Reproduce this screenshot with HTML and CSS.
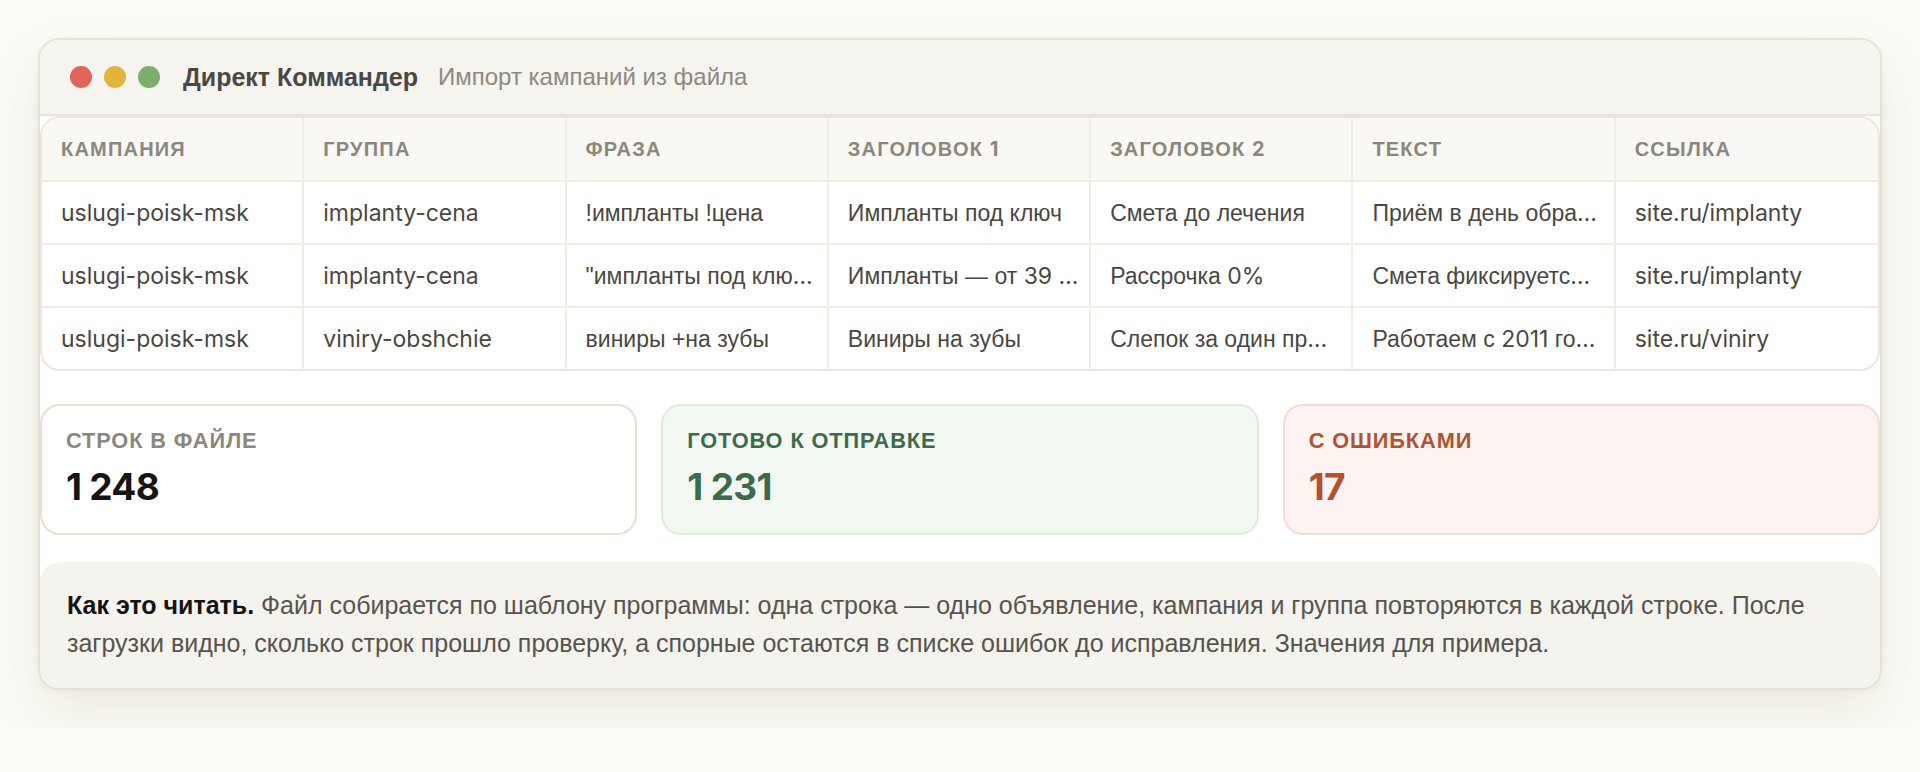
FILE: index.html
```html
<!DOCTYPE html>
<html lang="ru">
<head>
<meta charset="utf-8">
<title>Директ Коммандер — импорт кампаний</title>
<link rel="stylesheet" href="styles.css">
</head>
<body>
<div class="page">
  <div class="window">
    <div class="titlebar">
      <div class="dots">
        <span class="dot dot-red"></span>
        <span class="dot dot-yellow"></span>
        <span class="dot dot-green"></span>
      </div>
      <span class="app-name">Директ Коммандер</span>
      <span class="app-sub">Импорт кампаний из файла</span>
    </div>

    <div class="table-wrap">
      <table class="grid">
        <thead>
          <tr>
            <th>Кампания</th>
            <th>Группа</th>
            <th>Фраза</th>
            <th>Заголовок <span class="lat">1</span></th>
            <th>Заголовок <span class="lat">2</span></th>
            <th>Текст</th>
            <th>Ссылка</th>
          </tr>
        </thead>
        <tbody>
          <tr>
            <td><span class="lat">uslugi-poisk-msk</span></td>
            <td><span class="lat">implanty-cena</span></td>
            <td>!импланты !цена</td>
            <td>Импланты под ключ</td>
            <td>Смета до лечения</td>
            <td title="Приём в день обращения">Приём в день обра<span class="lat">…</span></td>
            <td><span class="lat">site.ru/implanty</span></td>
          </tr>
          <tr>
            <td><span class="lat">uslugi-poisk-msk</span></td>
            <td><span class="lat">implanty-cena</span></td>
            <td title="&quot;импланты под ключ&quot;">"импланты под клю<span class="lat">…</span></td>
            <td title="Импланты — от 39 000 ₽">Импланты — от <span class="lat">39 …</span></td>
            <td>Рассрочка <span class="lat">0%</span></td>
            <td title="Смета фиксируется в договоре">Смета фиксируетс<span class="lat">…</span></td>
            <td><span class="lat">site.ru/implanty</span></td>
          </tr>
          <tr>
            <td><span class="lat">uslugi-poisk-msk</span></td>
            <td><span class="lat">viniry-obshchie</span></td>
            <td>виниры +на зубы</td>
            <td>Виниры на зубы</td>
            <td title="Слепок за один приём">Слепок за один пр<span class="lat">…</span></td>
            <td title="Работаем с 2011 года">Работаем с <span class="lat">2011</span> го<span class="lat">…</span></td>
            <td><span class="lat">site.ru/viniry</span></td>
          </tr>
        </tbody>
      </table>
    </div>

    <div class="stats">
      <div class="stat stat-total">
        <div class="stat-label">Строк в файле</div>
        <div class="stat-value">1&nbsp;248</div>
      </div>
      <div class="stat stat-ok">
        <div class="stat-label">Готово к отправке</div>
        <div class="stat-value">1&nbsp;231</div>
      </div>
      <div class="stat stat-err">
        <div class="stat-label">С ошибками</div>
        <div class="stat-value">17</div>
      </div>
    </div>

    <p class="note"><strong>Как это читать.</strong> Файл собирается по шаблону программы: одна строка — одно объявление, кампания и группа повторяются в каждой строке. После загрузки видно, сколько строк прошло проверку, а спорные остаются в списке ошибок до исправления. Значения для примера.</p>
  </div>
</div>
</body>
</html>
```

FILE: styles.css
```css
* {
  box-sizing: border-box;
}

html,
body {
  margin: 0;
  padding: 0;
}

body {
  background: #fcfbf6;
  font-family: "Liberation Sans", Arial, sans-serif;
  color: #4a4741;
}

.page {
  padding: 38px;
}

.window {
  width: 100%;
  background: #ffffff;
  border: 2px solid #e6e2d5;
  border-radius: 21px;
  overflow: hidden;
  box-shadow: 0 24px 60px rgba(90, 80, 40, 0.1), 0 2px 8px rgba(90, 80, 40, 0.04);
}

/* title bar */
.titlebar {
  display: flex;
  align-items: center;
  height: 76px;
  padding: 0 30px;
  background: #f5f4ef;
  border-bottom: 2px solid #e8e4d8;
}

.dots {
  display: flex;
  gap: 12px;
}

.dot {
  width: 22px;
  height: 22px;
  border-radius: 50%;
}

.dot-red {
  background: #e0645b;
}

.dot-yellow {
  background: #e3b33e;
}

.dot-green {
  background: #7eae6b;
}

.app-name {
  margin-left: 23px;
  font-size: 25px;
  font-weight: 700;
  color: #4b4843;
}

.app-sub {
  margin-left: 20px;
  font-size: 24px;
  color: #8d897f;
}

.lat {
  font-family: Inter, "Liberation Sans", sans-serif;
}

/* table */
.table-wrap {
  border: 2px solid #ebe7dc;
  border-radius: 20px;
  overflow: hidden;
}

.grid {
  width: 100%;
  table-layout: fixed;
  border-collapse: separate;
  border-spacing: 0;
}

.grid th,
.grid td {
  padding: 18.5px 8px 18.5px 19px;
  line-height: 24px;
  text-align: left;
  white-space: nowrap;
  overflow: hidden;
  text-overflow: ellipsis;
  border-right: 2px solid #f0ede6;
  border-bottom: 2px solid #f0ede6;
}

.grid th:last-child,
.grid td:last-child {
  border-right: none;
}

.grid tbody tr:last-child td {
  border-bottom: none;
}

.grid th {
  padding-top: 19px;
  padding-bottom: 19px;
  background: #f9f8f4;
  font-size: 20px;
  font-weight: 700;
  letter-spacing: 1.2px;
  text-transform: uppercase;
  color: #8b877c;
}

.grid td {
  font-size: 23px;
  color: #4a4741;
}

/* stats */
.stats {
  display: grid;
  grid-template-columns: repeat(3, 1fr);
  gap: 24px;
  margin-top: 33px;
}

.stat {
  border: 2px solid #e6e1d3;
  border-radius: 20px;
  padding: 22px 24px 23px;
  background: #ffffff;
}

.stat-label {
  font-size: 21.75px;
  line-height: 1.2;
  font-weight: 700;
  letter-spacing: 0.9px;
  text-transform: uppercase;
  color: #8b877d;
}

.stat-value {
  margin-top: 10px;
  font-family: Inter, "Liberation Sans", sans-serif;
  font-size: 37px;
  line-height: 46px;
  font-weight: 700;
  letter-spacing: -0.7px;
  color: #161514;
}

.stat-ok {
  background: #f4f8f3;
  border-color: #e1ebdf;
}

.stat-ok .stat-label,
.stat-ok .stat-value {
  color: #3c6b4b;
}

.stat-err {
  background: #fdf4f1;
  border-color: #f0ddd4;
}

.stat-err .stat-label,
.stat-err .stat-value {
  color: #b2522f;
}

/* note */
.note {
  margin: 27px 0 0;
  padding: 24px 27px 26px;
  background: #f4f3ee;
  border-radius: 20px;
  font-size: 25px;
  line-height: 38px;
  color: #57544d;
}

.note strong {
  color: #141414;
  font-weight: 700;
}
```
